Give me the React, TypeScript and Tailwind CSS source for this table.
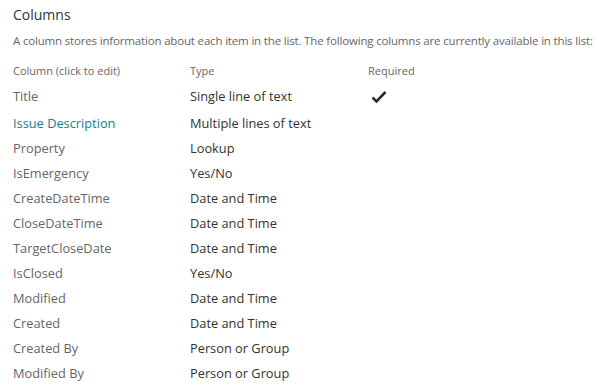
const rows: { name: string; type: string; required?: boolean; link?: boolean }[] = [
  { name: 'Title', type: 'Single line of text', required: true },
  { name: 'Issue Description', type: 'Multiple lines of text', link: true },
  { name: 'Property', type: 'Lookup' },
  { name: 'IsEmergency', type: 'Yes/No' },
  { name: 'CreateDateTime', type: 'Date and Time' },
  { name: 'CloseDateTime', type: 'Date and Time' },
  { name: 'TargetCloseDate', type: 'Date and Time' },
  { name: 'IsClosed', type: 'Yes/No' },
  { name: 'Modified', type: 'Date and Time' },
  { name: 'Created', type: 'Date and Time' },
  { name: 'Created By', type: 'Person or Group' },
  { name: 'Modified By', type: 'Person or Group' },
];

function Check() {
  return (
    <svg width="16" height="14" viewBox="0 0 16 14" className="text-[#2b2b2b]">
      <path d="M1.5 7.5 L5.5 11.5 L14.5 2" fill="none" stroke="currentColor" strokeWidth="2.6" />
    </svg>
  );
}

export default function App() {
  return (
    <div className="h-[390px] w-[597px] overflow-hidden bg-white pl-[13px] pt-[5px] font-['Open_Sans',sans-serif]">
      <h2 className="text-[14px] leading-[20px] text-[#333]">Columns</h2>
      <p className="mt-[8px] whitespace-nowrap text-[11.5px] leading-[16px] tracking-[-0.17px] text-[#666]">
        A column stores information about each item in the list. The following columns are currently available in this list:
      </p>

      <div className="mt-[14px] grid grid-cols-[177px_178px_1fr] text-[11px] leading-[16px] text-[#666]">
        <span>Column (click to edit)</span>
        <span>Type</span>
        <span>Required</span>
      </div>

      <div className="mt-[4px] flex flex-col">
        {rows.map((r, i) => (
          <div
            key={r.name}
            className={`grid grid-cols-[177px_178px_1fr] items-center text-[12.8px] ${i === 0 ? 'h-[28px]' : 'h-[25px]'}`}
          >
            <span className={r.link ? 'text-[#12808a]' : 'text-[#666]'}>{r.name}</span>
            <span className="text-[#333]">{r.type}</span>
            <span className="pl-[3px]">{r.required && <Check />}</span>
          </div>
        ))}
      </div>
    </div>
  );
}
